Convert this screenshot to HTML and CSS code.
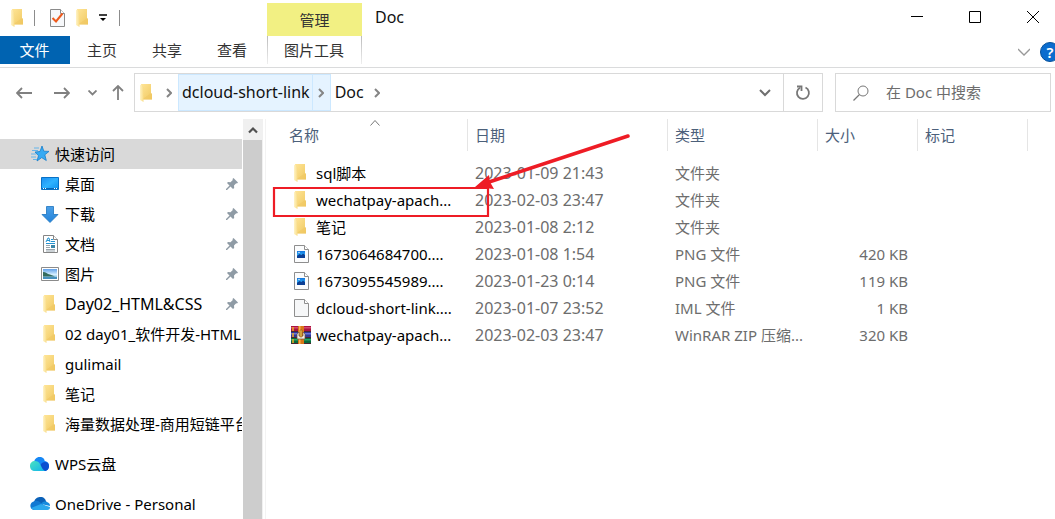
FILE: index.html
```html
<!DOCTYPE html>
<html lang="zh-CN">
<head>
<meta charset="utf-8">
<title>Doc</title>
<link rel="stylesheet" href="styles.css">
</head>
<body>
<svg class="defs" aria-hidden="true">
  <defs>
    <linearGradient id="g-folder" x1="0" y1="0" x2="1" y2="1"><stop offset="0" stop-color="#ffe597"/><stop offset="1" stop-color="#f0c962"/></linearGradient>
    <linearGradient id="g-flap" x1="0" y1="0" x2="1" y2="0"><stop offset="0" stop-color="#fff3c6"/><stop offset="1" stop-color="#f9dc86"/></linearGradient>
    <linearGradient id="g-blue" x1="0" y1="0" x2="1" y2="1"><stop offset="0" stop-color="#1b8ef2"/><stop offset=".5" stop-color="#2fb2ff"/><stop offset="1" stop-color="#0c90ee"/></linearGradient>
    <linearGradient id="g-down" x1="0" y1="0" x2="0" y2="1"><stop offset="0" stop-color="#4ba0e8"/><stop offset="1" stop-color="#2383da"/></linearGradient>
    <linearGradient id="g-sky" x1="0" y1="0" x2="0" y2="1"><stop offset="0" stop-color="#5f9fe8"/><stop offset=".55" stop-color="#d6efff"/><stop offset="1" stop-color="#4b9ccb"/></linearGradient>
    <linearGradient id="g-wps" x1="0" y1="0" x2="1" y2="1"><stop offset="0" stop-color="#4be3c0"/><stop offset="1" stop-color="#12b4ec"/></linearGradient>
    <linearGradient id="g-thumb" x1="0" y1="0" x2="0" y2="1"><stop offset="0" stop-color="#1272dc"/><stop offset=".5" stop-color="#29a5f5"/><stop offset="1" stop-color="#0b4aa8"/></linearGradient>
  </defs>
  <symbol id="i-folder" viewBox="0 0 12 18">
    <path d="M1 0h10v9l1 1v5.500H3z" fill="url(#g-folder)"/>
    <path d="M0 0.500 3.500 3.500V18L0 16z" fill="url(#g-flap)"/>
    <path d="M10.500 9.500h1.500v6H3.500v-1z" fill="#efc65f" opacity=".5"/>
  </symbol>
  <symbol id="i-check" viewBox="0 0 15 18">
    <path d="M.5.500h10l4 4v13H.5z" fill="#f7f8fa" stroke="#8a8a8a"/>
    <path d="M10.500.500v4h4" fill="#fff" stroke="#8a8a8a"/>
    <path d="m2.500 9 3.500 3.500 6.500-8" fill="none" stroke="#ee5a1c" stroke-width="2"/>
  </symbol>
  <symbol id="i-page" viewBox="0 0 15 18">
    <path d="M.5.500h10l4 4v13H.5z" fill="#f6f7f8" stroke="#8e8e8e"/>
    <path d="M10.500.500v4h4" fill="#fff" stroke="#8e8e8e"/>
  </symbol>
  <symbol id="i-png" viewBox="0 0 15 18">
    <path d="M.5.500h10l4 4v13H.5z" fill="#fbfcfd" stroke="#8e8e8e"/>
    <path d="M10.500.500v4h4" fill="#fff" stroke="#8e8e8e"/>
    <path d="M3 6h8v7H3z" fill="url(#g-thumb)"/>
    <path d="m3 11 2.500-2 2 1L9 8.500l2 1.500v3H3z" fill="#0c3f94"/><circle cx="5" cy="7.500" r=".7" fill="#fff"/>
  </symbol>
  <symbol id="i-rar" viewBox="0 0 20 18">
    <path d="M0 0h20v5.500H0z" fill="#a9143f"/><path d="M0 1h20v1.500H0z" fill="#d34773"/>
    <path d="M0 6h20v5.500H0z" fill="#30389a"/><path d="M0 7h20v1.500H0z" fill="#6874d6"/>
    <path d="M0 12h20v6H0z" fill="#08683c"/><path d="M0 13h20v1.500H0z" fill="#29a76a"/>
    <path d="M0 5.500h20M0 11.500h20M0 17.500h20" stroke="#4a2531"/>
    <path d="M2 1v4m0 2v4m0 2v4" stroke="#f1ad25" stroke-width="1.500"/>
    <path d="M7 0h6v18H7z" fill="#d97617"/><path d="M8 0h1.500v18H8z" fill="#f8b550"/>
    <path d="M6 8v5h8V8l-2-2v4H8V6z" fill="#f4eee4" stroke="#67513e" stroke-width=".7"/><path d="M9 4h2v7H9z" fill="#eec04b" stroke="#744714" stroke-width=".5"/>
  </symbol>
  <symbol id="i-star" viewBox="-1 -1 20 18">
    <path d="m11 0 1.800 5.200 5.200.200-4.200 3.400 1.500 5.700-4.600-2.900L6 15l1.500-5.300L4 6l5-.500z" fill="#35aaf3" stroke="#157dcc" stroke-width=".8"/>
    <path d="M3 2h5M1 4.500h6M0 8h5M0 11h5M2 13.500h4" stroke="#65b5ea"/>
  </symbol>
  <symbol id="i-desktop" viewBox="-1 -2 20 18">
    <path d="M.5.500h17v12H.5z" fill="url(#g-blue)" stroke="#0871c6"/>
    <path d="M1 11.500h16" stroke="#0967b7"/><path d="M2 11.500h1m1 0h1m8 0h1m1 0h1" stroke="#fff"/>
  </symbol>
  <symbol id="i-down" viewBox="-2 -1 20 18">
    <path d="M4.500.500h7v8h4.500L8 16.500 0 8.500h4.500z" fill="url(#g-down)" stroke="#1c73be" stroke-width=".8"/>
  </symbol>
  <symbol id="i-doc" viewBox="-3 0 20 18">
    <path d="M.5.500h10l4 4v13H.5z" fill="#fff" stroke="#858585"/>
    <path d="M10.500.500v4h4" fill="#fff" stroke="#858585"/>
    <path d="m3 7 2-4h1l1 4M4 5.500h3M8 4.500h2M8 6.500h4M3 8.500h9" fill="none" stroke="#2593d1"/>
    <path d="M8 10h4v3H8z" fill="#3b86a9"/><path d="M3 10.500h4M3 12.500h4M3 14.500h9M3 16h9" stroke="#98a5ad"/>
  </symbol>
  <symbol id="i-picture" viewBox="-1 -2 20 18">
    <path d="M.5.500h17v13H.5z" fill="#fff" stroke="#8b8b8b"/>
    <path d="M2 2h14v10H2z" fill="url(#g-sky)"/>
    <path d="M2 5c3 0 4 2 7 2.500l5 2H2z" fill="#356b5d"/><path d="M2 10h14v2H2z" fill="#4690bd"/>
  </symbol>
  <symbol id="i-pin" viewBox="0 0 12 12">
    <path d="m7.500 0 4.500 4.500-1 1-.800-.300L8 7.500l.200 2.500-1.200 1L4.500 8.500 1 12H0v-1l3.500-3.500L1 5l1-1 2.500.200L6.800 2l-.300-1z" fill="#8f9ba5"/>
  </symbol>
  <symbol id="i-wps" viewBox="0 -2 20 18">
    <path d="M4 7C4 2 6.500 0 9.500 0 13 0 14.500 2 14.700 4 18 4.500 19 6.500 19 9c0 3-2 5-5 5H6z" fill="#1687f5"/>
    <path d="M11 7c2-3 8-3 8 2 0 3-2 5-5 5H9z" fill="#0b4fd0"/>
    <path d="M5 4c4 0 5 3 6 5s2 4 4 5H5C2 14 0 12 0 9s2-5 5-5z" fill="url(#g-wps)"/>
  </symbol>
  <symbol id="i-onedrive" viewBox="0 -2 20 18">
    <path d="M4 5C5 1 8 0 10.500 0 14 0 15.500 2 16.200 5L10 9z" fill="#0b61b8"/>
    <path d="M5 4c2-.500 4 .500 6 2l4 3-11 4c-5-1-5-8 1-9z" fill="#1279d2"/>
    <path d="M11 7c2-3 5-2.500 6-2 3 1 3 3 3 4z" fill="#158ade"/>
    <path d="M1 11 11 7l9 3c0 3-2 3-4 3H5c-2 0-3-1-4-2z" fill="#2ba7ed"/>
  </symbol>
  <symbol id="i-right" viewBox="0 0 6 10"><path d="m1 1 4 4-4 4" fill="none" stroke="currentColor" stroke-width="2"/></symbol>
</svg>

<div class="window">
  <header class="titlebar">
    <div class="quick">
      <svg class="folder"><use href="#i-folder"/></svg>
      <span class="bar"></span>
      <button class="plain" aria-label="属性"><svg class="page"><use href="#i-check"/></svg></button>
      <button class="plain" aria-label="新建文件夹"><svg class="folder"><use href="#i-folder"/></svg></button>
      <button class="plain" aria-label="自定义"><svg width="8" height="8" viewBox="0 0 8 8"><path d="M0 1h8" stroke="#000" stroke-width="1.500"/><path d="M1 4h6L4 7z"/></svg></button>
      <span class="bar"></span>
    </div>
    <div class="context">管理</div>
    <h1 class="title">Doc</h1>
    <div class="controls">
      <button class="plain" aria-label="最小化"><svg width="12" height="12"><path d="M0 5.500h12" stroke="#000"/></svg></button>
      <button class="plain" aria-label="最大化"><svg width="12" height="12"><path d="M.5.500h11v11H.5z" fill="none" stroke="#000"/></svg></button>
      <button class="plain" aria-label="关闭"><svg width="12" height="12"><path d="m0 0 12 12M12 0 0 12" stroke="#000"/></svg></button>
    </div>
  </header>

  <nav class="ribbon">
    <button class="tab file">文件</button>
    <button class="tab">主页</button>
    <button class="tab">共享</button>
    <button class="tab">查看</button>
    <button class="tab tools">图片工具</button>
    <div class="ribbon-end">
      <button class="plain" aria-label="展开功能区"><svg width="12" height="8" viewBox="0 0 12 8"><path d="m0 1 6 6 6-6" fill="none" stroke="#999" stroke-width="1.300"/></svg></button>
      <button class="help" aria-label="帮助">?</button>
    </div>
  </nav>

  <div class="navbar">
    <div class="history">
      <button class="plain" aria-label="后退"><svg width="16" height="12" viewBox="0 0 16 12"><path d="M16 6H1m5-5L1 6l5 5" fill="none" stroke="#808080" stroke-width="1.800"/></svg></button>
      <button class="plain" aria-label="前进"><svg width="16" height="12" viewBox="0 0 16 12"><path d="M0 6h15m-5-5 5 5-5 5" fill="none" stroke="#808080" stroke-width="1.800"/></svg></button>
      <button class="plain" aria-label="最近"><svg width="9" height="6" viewBox="0 0 9 6"><path d="m0.500 0.500 4 4 4-4" fill="none" stroke="#808080" stroke-width="1.800"/></svg></button>
      <button class="plain" aria-label="向上"><svg width="12" height="15" viewBox="0 0 12 15"><path d="M6 15V1M1 6l5-5 5 5" fill="none" stroke="#808080" stroke-width="1.800"/></svg></button>
    </div>
    <div class="address">
      <svg class="folder"><use href="#i-folder"/></svg>
      <svg class="arrow lead"><use href="#i-right"/></svg>
      <button class="crumb active">dcloud-short-link</button>
      <button class="crumb-more" aria-label="子文件夹"><svg class="arrow"><use href="#i-right"/></svg></button>
      <button class="crumb">Doc</button>
      <svg class="arrow trail"><use href="#i-right"/></svg>
      <button class="plain drop" aria-label="历史记录"><svg width="12" height="8" viewBox="0 0 12 8"><path d="m1 1 5 5 5-5" fill="none" stroke="#6f6f6f" stroke-width="2"/></svg></button>
      <button class="plain refresh" aria-label="刷新"><svg width="16" height="16" viewBox="0 0 16 16"><path d="M10.500 2.500A6 6 0 1 1 5 2.700" fill="none" stroke="#777" stroke-width="1.800"/><path d="M2 1.500h4.500V6" fill="none" stroke="#777" stroke-width="1.800"/></svg></button>
    </div>
    <label class="search">
      <svg width="16" height="16" viewBox="0 0 16 16"><circle cx="10" cy="6" r="5" fill="none" stroke="#777"/><path d="M6.500 9.500.5 15.500" stroke="#777" stroke-width="1.300"/></svg>
      <input type="text" placeholder="在 Doc 中搜索" aria-label="搜索">
    </label>
  </div>

  <div class="content">
    <aside class="sidebar">
      <ul class="tree">
        <li class="node root selected"><svg class="ic"><use href="#i-star"/></svg><a href="#">快速访问</a></li>
        <li class="node"><svg class="ic"><use href="#i-desktop"/></svg><a href="#">桌面</a><svg class="pin"><use href="#i-pin"/></svg></li>
        <li class="node"><svg class="ic"><use href="#i-down"/></svg><a href="#">下载</a><svg class="pin"><use href="#i-pin"/></svg></li>
        <li class="node"><svg class="ic"><use href="#i-doc"/></svg><a href="#">文档</a><svg class="pin"><use href="#i-pin"/></svg></li>
        <li class="node"><svg class="ic"><use href="#i-picture"/></svg><a href="#">图片</a><svg class="pin"><use href="#i-pin"/></svg></li>
        <li class="node"><svg class="ic ic-folder"><use href="#i-folder"/></svg><a class="latin" href="#">Day02_HTML&amp;CSS</a><svg class="pin"><use href="#i-pin"/></svg></li>
        <li class="node"><svg class="ic ic-folder"><use href="#i-folder"/></svg><a href="#">02 day01_软件开发-HTML</a></li>
        <li class="node"><svg class="ic ic-folder"><use href="#i-folder"/></svg><a href="#">gulimail</a></li>
        <li class="node"><svg class="ic ic-folder"><use href="#i-folder"/></svg><a href="#">笔记</a></li>
        <li class="node"><svg class="ic ic-folder"><use href="#i-folder"/></svg><a href="#">海量数据处理-商用短链平台</a></li>
        <li class="node root spaced"><svg class="ic"><use href="#i-wps"/></svg><a href="#">WPS云盘</a></li>
        <li class="node root spaced"><svg class="ic"><use href="#i-onedrive"/></svg><a href="#">OneDrive - Personal</a></li>
      </ul>
      <div class="scroll">
        <button class="plain up" aria-label="向上滚动"><svg width="10" height="8" viewBox="0 0 10 8"><path d="m1 6.500 4-4 4 4" fill="none" stroke="#505050" stroke-width="2.200"/></svg></button>
        <div class="thumb"></div>
      </div>
    </aside>

    <main class="files">
      <table>
        <colgroup><col class="c-name"><col class="c-date"><col class="c-type"><col class="c-size"><col class="c-tag"><col></colgroup>
        <thead>
          <tr><th class="name">名称<svg class="sort" viewBox="0 0 10 6"><path d="m.5 5.500 4.500-5 4.500 5" fill="none" stroke="#777"/></svg></th><th>日期</th><th>类型</th><th>大小</th><th>标记</th><td></td></tr>
        </thead>
        <tbody>
          <tr><td class="name"><div class="file-name"><svg class="ic ic-folder"><use href="#i-folder"/></svg>sql脚本</div></td><td class="date">2023-01-09 21:43</td><td>文件夹</td><td class="size"></td><td></td><td></td></tr>
          <tr><td class="name"><div class="file-name"><svg class="ic ic-folder"><use href="#i-folder"/></svg>wechatpay-apach...</div></td><td class="date">2023-02-03 23:47</td><td>文件夹</td><td class="size"></td><td></td><td></td></tr>
          <tr><td class="name"><div class="file-name"><svg class="ic ic-folder"><use href="#i-folder"/></svg>笔记</div></td><td class="date">2023-01-08 2:12</td><td>文件夹</td><td class="size"></td><td></td><td></td></tr>
          <tr><td class="name"><div class="file-name"><svg class="ic ic-page"><use href="#i-png"/></svg>1673064684700....</div></td><td class="date">2023-01-08 1:54</td><td>PNG 文件</td><td class="size">420 KB</td><td></td><td></td></tr>
          <tr><td class="name"><div class="file-name"><svg class="ic ic-page"><use href="#i-png"/></svg>1673095545989....</div></td><td class="date">2023-01-23 0:14</td><td>PNG 文件</td><td class="size">119 KB</td><td></td><td></td></tr>
          <tr><td class="name"><div class="file-name"><svg class="ic ic-page"><use href="#i-page"/></svg>dcloud-short-link....</div></td><td class="date">2023-01-07 23:52</td><td>IML 文件</td><td class="size">1 KB</td><td></td><td></td></tr>
          <tr><td class="name"><div class="file-name"><svg class="ic"><use href="#i-rar"/></svg>wechatpay-apach...</div></td><td class="date">2023-02-03 23:47</td><td>WinRAR ZIP 压缩...</td><td class="size">320 KB</td><td></td><td></td></tr>
        </tbody>
      </table>
      <svg class="callout" viewBox="0 0 360 84" aria-hidden="true">
        <path d="M2 54h214v28H2z" fill="none" stroke="#ee1c25" stroke-width="2.200"/>
        <path d="M356 2 214 49" stroke="#ee1c25" stroke-width="3.500" stroke-linecap="round"/>
        <path d="m203 53 14-12 1 7 4 7z" fill="#ee1c25"/>
      </svg>
    </main>
  </div>
</div>
</body>
</html>
```
FILE: styles.css
```css
* { box-sizing: border-box; }
body {
  margin: 0;
  background: #fff;
  color: #111;
  font: 15px/20px "Noto Sans", "Noto Sans CJK SC", sans-serif;
}
button, input { font: inherit; color: inherit; }
svg { display: block; flex: none; }
.defs { position: absolute; width: 0; height: 0; }
.window { min-height: 100vh; display: flex; flex-direction: column; overflow: hidden; }
.plain {
  display: flex;
  align-items: center;
  justify-content: center;
  padding: 0;
  border: 0;
  background: none;
}
.folder { width: 12px; height: 18px; }
.page { width: 15px; height: 18px; }

.titlebar { display: flex; height: 36px; }
.quick { display: flex; align-items: center; gap: 12px; width: 267px; padding-left: 11px; }
.quick .folder:first-child { margin-right: -1px; }
.quick .page { margin-left: 3px; }
.plain .folder { margin-right: 0; margin-left: -1px; }
.bar { width: 1px; height: 16px; background: #8c8c8c; }
.context {
  width: 95px;
  margin-top: 3px;
  background: #f2f083;
  color: #333;
  line-height: 34px;
  text-align: center;
}
.title { margin: 0 0 0 13px; font-size: 16px; font-weight: 400; line-height: 34px; }
.controls { display: flex; gap: 14px; margin-left: auto; }
.controls .plain { width: 44px; height: 34px; }

.ribbon { display: flex; height: 32px; border-bottom: 1px solid #dadbdc; }
.tab {
  width: 65px;
  height: 28px;
  padding: 0 1px 0 0;
  border: 0;
  background: none;
  color: #333;
}
.tab.file { width: 70px; background: #0063b1; color: #fff; }
.tab.tools {
  width: 95px;
  margin-left: 2px;
  background:
    linear-gradient(#bbb, #eee) left / 1px 100% no-repeat,
    linear-gradient(#bbb, #eee) right / 1px 100% no-repeat;
}
.ribbon-end { display: flex; align-items: center; gap: 10px; margin: 0 -5px 0 auto; }
.help {
  width: 20px;
  height: 20px;
  padding: 0;
  border: 1px solid #05509a;
  border-radius: 50%;
  background: #0a6cce;
  color: #fff;
  font-weight: 600;
  line-height: 18px;
}

.navbar { display: flex; height: 51px; padding: 5px 4px 7px 16px; }
.history { display: flex; align-items: center; width: 118px; }
.history .plain + .plain { margin-left: 22px; }
.history .plain:nth-child(3) { margin-left: 18px; }
.history .plain:nth-child(4) { margin-left: 15px; }
.address { display: flex; align-items: center; flex: 1; border: 1px solid #d9d9d9; font-size: 16px; }
.address .folder { margin: 0 14px 0 5px; }
.arrow { width: 6px; height: 10px; color: #858585; }
.lead { margin-right: 6px; }
.crumb, .crumb-more { align-self: stretch; padding: 0 4px 2px; border: 0; background: none; }
.crumb.active { border: 1px solid #cce8ff; background: #e5f3ff; padding: 0 2px 2px 3px; }
.crumb-more { width: 18px; padding: 0 5px; border: 1px solid #cce8ff; border-left: 0; background: #e5f3ff; }
.trail { margin-left: 6px; }
.drop { width: 36px; height: 100%; margin-left: auto; }
.refresh { width: 39px; height: 100%; border-left: 1px solid #d9d9d9; }
.search {
  display: flex;
  align-items: center;
  gap: 17px;
  width: 216px;
  margin-left: 12px;
  padding-left: 17px;
  border: 1px solid #d9d9d9;
}
.search input { flex: 1; min-width: 0; padding: 0 0 2px; border: 0; outline: 0; background: none; }
.search input::placeholder { color: #6d6d6d; opacity: 1; }

.content { display: flex; flex: 1; }
.sidebar { display: flex; width: 266px; padding-right: 2px; border-right: 1px solid #f3f3f3; }
.tree { flex: 1; min-width: 0; margin: 0; padding: 20px 1px 0 0; list-style: none; }
.node { display: flex; align-items: center; height: 30px; padding: 0 4px 0 40px; }
.node a { flex: 1; min-width: 0; color: #000; text-decoration: none; white-space: nowrap; }
.node:not(:has(.pin)) { padding-right: 0; overflow: hidden; }
.node.root { padding-left: 30px; }
.node .latin, .date { font-size: 16px; }
.spaced { margin-top: 10px; }
.selected { background: #d9d9d9; }
.ic { width: 20px; height: 18px; margin-right: 5px; }
.ic-folder { width: 12px; margin: 0 10px 0 3px; }
.ic-page { width: 15px; margin: 0 7px 0 3px; }
.pin { width: 12px; height: 12px; }
.scroll { display: flex; flex-direction: column; width: 20px; background: #f0f0f0; }
.up { height: 21px; }
.thumb { flex: 1; margin-right: 1px; background: #cdcdcd; }

.files { position: relative; flex: 1; min-width: 0; }
table { width: 100%; table-layout: fixed; border-collapse: separate; border-spacing: 0; }
.c-name { width: 202px; }
.c-date { width: 200px; }
.c-type { width: 150px; }
.c-size { width: 100px; }
.c-tag { width: 110px; }
th {
  position: relative;
  height: 32px;
  padding: 0 7px;
  border-right: 1px solid #e5e5e5;
  color: #4c607a;
  font-weight: 400;
  text-align: left;
}
th.name { padding-left: 23px; }
.sort { position: absolute; top: 1px; left: 104px; width: 10px; height: 6px; }
tbody::before { content: ""; display: block; height: 8px; }
tbody td { height: 27px; padding: 0 7px; color: #6d6d6d; white-space: nowrap; }
tbody .name { padding: 0 0 0 25px; color: #000; }
tbody .size { padding-right: 10px; text-align: right; }
.file-name { display: flex; align-items: center; }
.callout { position: absolute; top: 15px; left: 6px; width: 360px; height: 84px; }
```
